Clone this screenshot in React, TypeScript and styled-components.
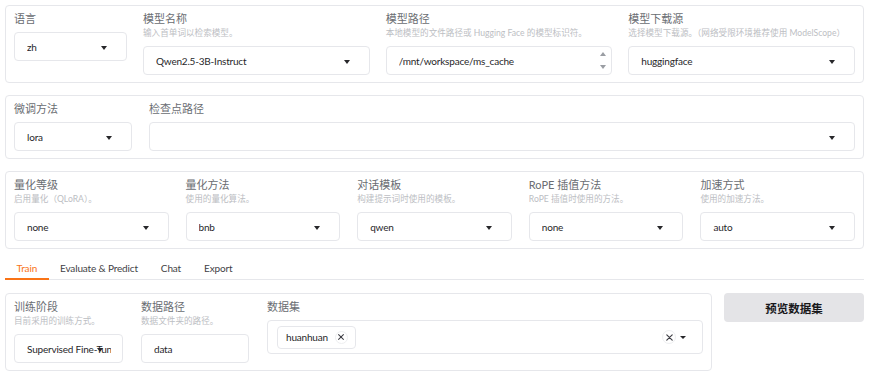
import React from "react";
import styled, { createGlobalStyle } from "styled-components";

const GlobalStyle = createGlobalStyle`
  html, body { margin: 0; padding: 0; background: #ffffff; }
  body {
    font-family: "Lato", "Noto Sans CJK SC", sans-serif;
    -webkit-font-smoothing: antialiased;
  }
  * { box-sizing: border-box; }
`;

const Page = styled.div`
  width: 869px;
  padding: 5px 5px 0 5px;
  display: flex;
  flex-direction: column;
`;

const Panel = styled.div<{ $cols: string; $gap: number; $mt?: number }>`
  display: grid;
  grid-template-columns: ${(p) => p.$cols};
  column-gap: ${(p) => p.$gap}px;
  align-items: start;
  border: 1px solid #e6e7eb;
  border-radius: 4px;
  background: #fff;
  padding: 6px 8px 7px 8px;
  margin-top: ${(p) => p.$mt ?? 0}px;
`;

const Field = styled.div`
  display: flex;
  flex-direction: column;
  min-width: 0;
`;

const Header = styled.div`
  display: flex;
  flex-direction: column;
  margin-bottom: 6px;
`;

const Label = styled.div`
  font-size: 11px;
  line-height: 14px;
  color: #6a6d72;
  white-space: nowrap;
`;

const Hint = styled.div`
  font-size: 8.6px;
  line-height: 13px;
  margin-top: 1px;
  color: #bcbec3;
  white-space: nowrap;
`;

const Box = styled.div<{ $h?: number; $pl?: number }>`
  position: relative;
  display: flex;
  align-items: center;
  height: ${(p) => p.$h ?? 29}px;
  border: 1px solid #e6e7eb;
  border-radius: 4px;
  background: #fff;
  padding: 0 11px 0 ${(p) => p.$pl ?? 12}px;
  overflow: hidden;
`;

const Value = styled.div`
  font-size: 10px;
  letter-spacing: -0.2px;
  color: #27272a;
  white-space: nowrap;
  overflow: hidden;
  flex: 1;
  min-width: 0;
`;

const Caret = styled.span`
  position: absolute;
  right: 19px;
  top: 50%;
  margin-top: -1px;
  width: 0;
  height: 0;
  border-left: 3.5px solid transparent;
  border-right: 3.5px solid transparent;
  border-top: 4px solid #27272a;
`;

const Spinner = styled.div`
  position: absolute;
  right: 5px;
  top: 0;
  bottom: 0;
  display: flex;
  flex-direction: column;
  justify-content: space-between;
  padding: 5px 0 5px 0;
`;

const SpinArrow = styled.span<{ $up?: boolean }>`
  width: 0;
  height: 0;
  border-left: 3.5px solid transparent;
  border-right: 3.5px solid transparent;
  ${(p) =>
    p.$up ? "border-bottom: 4px solid #9a9da3;" : "border-top: 4px solid #9a9da3;"}
`;

const TabBar = styled.div`
  display: flex;
  margin-top: 9px;
  height: 22px;
  border-bottom: 1px solid #e6e7eb;
`;

const Tab = styled.div<{ $active?: boolean }>`
  padding: 0 11.5px;
  font-size: 10px;
  letter-spacing: -0.15px;
  line-height: 20px;
  color: ${(p) => (p.$active ? "#f97316" : "#3f3f46")};
  border-bottom: 2px solid ${(p) => (p.$active ? "#f97316" : "transparent")};
  margin-bottom: -1px;
  white-space: nowrap;
`;

const TrainRow = styled.div`
  display: grid;
  grid-template-columns: 707px 1fr;
  column-gap: 12px;
  align-items: start;
  margin-top: 13px;
`;

const Chips = styled.div`
  display: flex;
  align-items: center;
  flex: 1;
`;

const Chip = styled.div`
  display: flex;
  align-items: center;
  gap: 7px;
  height: 23px;
  padding: 0 7px 0 8px;
  border: 1px solid #e6e7eb;
  border-radius: 4px;
  font-size: 10px;
  letter-spacing: -0.2px;
  color: #27272a;
`;

const CloseDot = styled.span<{ $size: number }>`
  display: inline-flex;
  align-items: center;
  justify-content: center;
  width: ${(p) => p.$size}px;
  height: ${(p) => p.$size}px;
  border-radius: 50%;
  border: 1px solid #eeeff1;
  color: #3f3f46;
`;

const TailControls = styled.div`
  display: flex;
  align-items: center;
  gap: 4px;
  margin-right: 5px;
`;

const InlineCaret = styled.span`
  width: 0;
  height: 0;
  border-left: 3px solid transparent;
  border-right: 3px solid transparent;
  border-top: 3.5px solid #27272a;
`;

const PreviewButton = styled.button`
  height: 29px;
  border: none;
  border-radius: 4px;
  background: #e4e4e7;
  font-family: "Lato", "Noto Sans CJK SC", sans-serif;
  font-size: 11.5px;
  font-weight: 700;
  color: #18181b;
  cursor: pointer;
`;

const XIcon = ({ s }: { s: number }) => (
  <svg width={s} height={s} viewBox="0 0 10 10">
    <path d="M2 2 L8 8 M8 2 L2 8" stroke="#3f3f46" strokeWidth="1.3" strokeLinecap="round" />
  </svg>
);

type SelectProps = { label: string; hint?: string; value: string };

const SelectField = ({ label, hint, value }: SelectProps) => (
  <Field>
    <Header>
      <Label>{label}</Label>
      {hint && <Hint>{hint}</Hint>}
    </Header>
    <Box>
      <Value>{value}</Value>
      <Caret />
    </Box>
  </Field>
);

export default function App() {
  return (
    <>
      <GlobalStyle />
      <Page>
        <Panel $cols="113px repeat(3, 1fr)" $gap={16}>
          <SelectField label="语言" value="zh" />
          <SelectField label="模型名称" hint="输入首单词以检索模型。" value="Qwen2.5-3B-Instruct" />
          <Field>
            <Header>
              <Label>模型路径</Label>
              <Hint>本地模型的文件路径或 Hugging Face 的模型标识符。</Hint>
            </Header>
            <Box>
              <Value>/mnt/workspace/ms_cache</Value>
              <Spinner>
                <SpinArrow $up />
                <SpinArrow />
              </Spinner>
            </Box>
          </Field>
          <SelectField
            label="模型下载源"
            hint="选择模型下载源。（网络受限环境推荐使用 ModelScope）"
            value="huggingface"
          />
        </Panel>

        <Panel $cols="118px 1fr" $gap={17} $mt={12}>
          <SelectField label="微调方法" value="lora" />
          <SelectField label="检查点路径" value="" />
        </Panel>

        <Panel $cols="repeat(5, 1fr)" $gap={17} $mt={12}>
          <SelectField label="量化等级" hint="启用量化（QLoRA）。" value="none" />
          <SelectField label="量化方法" hint="使用的量化算法。" value="bnb" />
          <SelectField label="对话模板" hint="构建提示词时使用的模板。" value="qwen" />
          <SelectField label="RoPE 插值方法" hint="RoPE 插值时使用的方法。" value="none" />
          <SelectField label="加速方式" hint="使用的加速方法。" value="auto" />
        </Panel>

        <TabBar>
          <Tab $active>Train</Tab>
          <Tab>Evaluate &amp; Predict</Tab>
          <Tab>Chat</Tab>
          <Tab>Export</Tab>
        </TabBar>

        <TrainRow>
          <Panel $cols="109px 108px 1fr" $gap={18}>
            <SelectField label="训练阶段" hint="目前采用的训练方式。" value="Supervised Fine-Tuning" />
            <Field>
              <Header>
                <Label>数据路径</Label>
                <Hint>数据文件夹的路径。</Hint>
              </Header>
              <Box>
                <Value>data</Value>
              </Box>
            </Field>
            <Field>
              <Header>
                <Label>数据集</Label>
              </Header>
              <Box $h={34} $pl={9}>
                <Chips>
                  <Chip>
                    huanhuan
                    <CloseDot $size={13}>
                      <XIcon s={8} />
                    </CloseDot>
                  </Chip>
                </Chips>
                <TailControls>
                  <CloseDot $size={14}>
                    <XIcon s={9} />
                  </CloseDot>
                  <InlineCaret />
                </TailControls>
              </Box>
            </Field>
          </Panel>
          <PreviewButton>预览数据集</PreviewButton>
        </TrainRow>
      </Page>
    </>
  );
}
